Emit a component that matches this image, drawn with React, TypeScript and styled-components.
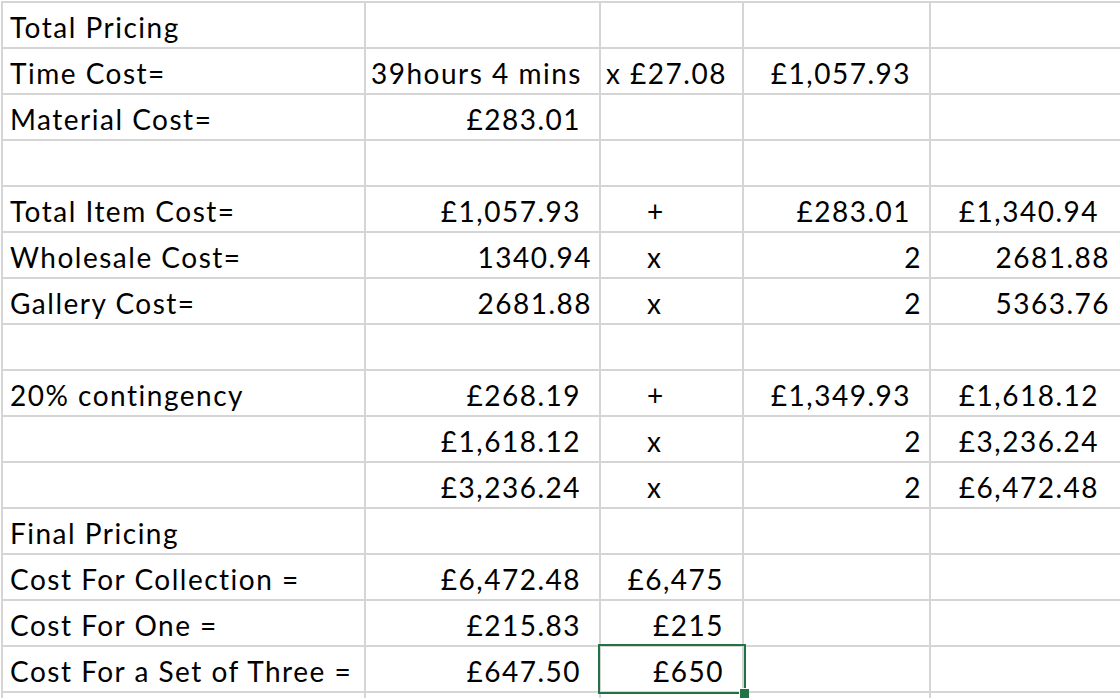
import styled, { createGlobalStyle } from 'styled-components';

type Align = 'label' | 'start' | 'op' | 'num' | 'money';

type CellData = {
  text?: string;
  align?: Align;
  selected?: boolean;
};

const GlobalStyle = createGlobalStyle`
  html, body {
    margin: 0;
    padding: 0;
    background: #ffffff;
    overflow: hidden;
  }

  body {
    font-family: Lato, 'Open Sans', sans-serif;
    color: #000000;
  }
`;

const Sheet = styled.div`
  display: grid;
  grid-template-columns: 361px 233px 141px 185px 1fr;
  grid-auto-rows: 44px;
  gap: 2px;
  width: 1119px;
  height: 697px;
  margin: 1px 0 0 1px;
  padding: 2px 0 0 2px;
  box-sizing: border-box;
  background: #d5d5d5;
  overflow: hidden;
`;

// left / right inner spacing for each kind of cell content
const padFor: Record<Align, [number, number]> = {
  label: [7, 0],
  start: [5, 0],
  op: [46, 0],
  num: [0, 7],
  money: [0, 18],
};

const Cell = styled.div<{ $align: Align; $edge: boolean }>`
  position: relative;
  display: flex;
  align-items: flex-end;
  justify-content: ${({ $align }) =>
    $align === 'num' || $align === 'money' ? 'flex-end' : 'flex-start'};
  padding: 0 ${({ $align, $edge }) => padFor[$align][1] + ($edge ? 3 : 0)}px 4px
    ${({ $align }) => padFor[$align][0]}px;
  background: #ffffff;
  font-size: 28px;
  line-height: 32px;
  letter-spacing: 1.5px;
  white-space: nowrap;
`;

const Selection = styled.div`
  position: absolute;
  z-index: 2;
  top: -3px;
  left: -3px;
  right: -4px;
  bottom: -3px;
  border: 2px solid #217346;
  pointer-events: none;
`;

const Handle = styled.div`
  position: absolute;
  right: -5px;
  bottom: -6px;
  width: 9px;
  height: 9px;
  background: #217346;
  border-left: 1px solid #ffffff;
  border-top: 1px solid #ffffff;
`;

const L = (text: string): CellData => ({ text, align: 'label' });
const N = (text: string): CellData => ({ text, align: 'num' });
const M = (text: string): CellData => ({ text, align: 'money' });
const O = (text: string): CellData => ({ text, align: 'op' });
const E: CellData = {};

const rows: CellData[][] = [
  [L('Total Pricing'), E, E, E, E],
  [L('Time Cost='), { text: '39hours 4 mins', align: 'start' }, { text: 'x £27.08', align: 'start' }, M('£1,057.93'), E],
  [L('Material Cost='), M('£283.01'), E, E, E],
  [E, E, E, E, E],
  [L('Total Item Cost='), M('£1,057.93'), O('+'), M('£283.01'), M('£1,340.94')],
  [L('Wholesale Cost='), N('1340.94'), O('x'), N('2'), N('2681.88')],
  [L('Gallery Cost='), N('2681.88'), O('x'), N('2'), N('5363.76')],
  [E, E, E, E, E],
  [L('20% contingency'), M('£268.19'), O('+'), M('£1,349.93'), M('£1,618.12')],
  [E, M('£1,618.12'), O('x'), N('2'), M('£3,236.24')],
  [E, M('£3,236.24'), O('x'), N('2'), M('£6,472.48')],
  [L('Final Pricing'), E, E, E, E],
  [L('Cost For Collection ='), M('£6,472.48'), M('£6,475'), E, E],
  [L('Cost For One ='), M('£215.83'), M('£215'), E, E],
  [L('Cost For a Set of Three ='), M('£647.50'), { text: '£650', align: 'money', selected: true }, E, E],
  [E, E, E, E, E],
];

const App = () => (
  <>
    <GlobalStyle />
    <Sheet>
      {rows.map((row, r) =>
        row.map((cell, c) => (
          <Cell key={`${r}-${c}`} $align={cell.align ?? 'label'} $edge={c === 4}>
            {cell.text}
            {cell.selected && (
              <Selection>
                <Handle />
              </Selection>
            )}
          </Cell>
        )),
      )}
    </Sheet>
  </>
);

export default App;
